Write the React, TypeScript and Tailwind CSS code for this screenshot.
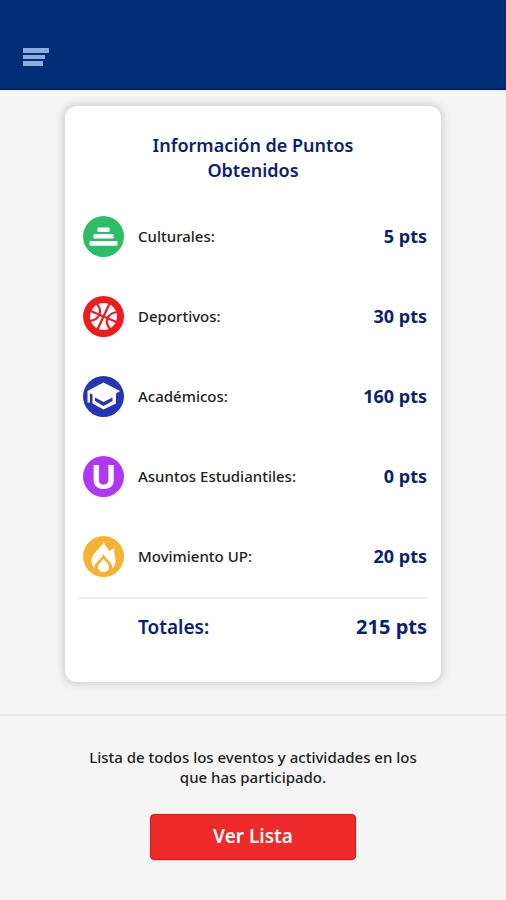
import type { ReactNode } from "react";

interface Category {
  id: string;
  label: string;
  points: number;
  color: string;
  icon: ReactNode;
}

const categories: Category[] = [
  {
    id: "culturales",
    label: "Culturales:",
    points: 5,
    color: "bg-[#2dbd66]",
    icon: (
      <svg viewBox="0 0 41 41" className="size-full" fill="white" aria-hidden="true">
        <rect x="14.5" y="11.5" width="12" height="4.5" rx="0.8" />
        <rect x="10.5" y="18" width="20" height="4.5" rx="0.8" />
        <rect x="6.5" y="25" width="28" height="4.8" rx="0.8" />
      </svg>
    ),
  },
  {
    id: "deportivos",
    label: "Deportivos:",
    points: 30,
    color: "bg-[#ee1c1f]",
    icon: (
      <svg viewBox="0 0 41 41" className="size-full" aria-hidden="true">
        <circle cx="20.5" cy="20.5" r="13.5" fill="white" />
        <g fill="none" stroke="#ee1c1f" strokeWidth="2.2">
          <path d="M27 6.500 14 34.500" />
          <path d="M6.500 14.500 34.500 26.500" />
          <path d="M13 7c7 7 5 17-7 18" />
          <path d="M28 34c-7-7-5-17 7-18" />
        </g>
      </svg>
    ),
  },
  {
    id: "academicos",
    label: "Académicos:",
    points: 160,
    color: "bg-[#2634b5]",
    icon: (
      <svg viewBox="0 0 41 41" className="size-full" aria-hidden="true">
        <path
          d="M20.500 6.500 37 15 33 17.500V27.500L20.500 33.500 9.500 27.500V18.500L7 17.200V26.500H4.500V15Z"
          fill="white"
        />
        <path d="M12 21.500 20.500 26 29.500 21.500V25L20.500 30 12 25Z" fill="#2634b5" />
      </svg>
    ),
  },
  {
    id: "asuntos",
    label: "Asuntos Estudiantiles:",
    points: 0,
    color: "bg-[#b136f5]",
    icon: <span className="text-[34px] leading-none font-bold text-white">U</span>,
  },
  {
    id: "movimiento",
    label: "Movimiento UP:",
    points: 20,
    color: "bg-[#f5b335]",
    icon: (
      <svg viewBox="0 0 41 41" className="size-full" aria-hidden="true">
        <path
          d="M21 5.500c-2 6-12 11-12.500 18.500-.3 5 3 9.500 7 11.500h10c4-2 7-5.500 7-10.500 0-4-1.500-7-1.300-12.500-2 .5-4 1.500-5 3-1-4.500-5.200-5-5.200-10z"
          fill="white"
        />
        <path d="M12.500 36c-4-9 5-11 8-18 3 7 12 9 8 18z" fill="#f5b335" />
        <path d="M20.500 22.500c2 3.500 5.500 5.500 5.500 9a5.500 4.500 0 0 1-11 0c0-3.500 3.500-5.500 5.500-9z" fill="white" />
      </svg>
    ),
  },
];

export default function App() {
  const total = categories.reduce((sum, c) => sum + c.points, 0);

  return (
    <div className="min-h-screen bg-[#f5f5f5] font-['Noto_Sans',sans-serif]">
      {/* Header */}
      <header className="flex h-[90px] items-end border-b border-[#120a78] bg-[#002d74] px-[23px] pb-[23px]">
        <button type="button" aria-label="Menú" className="flex flex-col gap-[2px]">
          <span className="h-[5px] w-[26px] bg-[#8dabdb]" />
          <span className="h-1 w-[22px] bg-[#8dabdb]" />
          <span className="h-[5px] w-5 bg-[#8dabdb]" />
        </button>
      </header>

      {/* Points card */}
      <main className="px-4 pt-4">
        <section className="mx-auto max-w-[376px] rounded-xl bg-white px-[14px] pt-[27px] pb-10 text-[#0b1f6f] shadow-[0_0_8px_2px_rgba(0,0,0,0.16)]">
          <h1 className="mx-auto mb-[13px] max-w-60 text-center text-lg leading-[25px] font-semibold">
            Información de Puntos Obtenidos
          </h1>

          <ul className="mb-px">
            {categories.map((c) => (
              <li key={c.id} className="flex h-20 items-center pl-1">
                <span className={`flex size-[41px] shrink-0 items-center justify-center rounded-full ${c.color}`}>
                  {c.icon}
                </span>
                <span className="ml-[14px] flex-1 text-[15px] font-medium text-[#222222]">{c.label}</span>
                <span className="text-lg font-bold">{c.points} pts</span>
              </li>
            ))}
          </ul>

          <div className="flex items-center justify-between border-t-2 border-[#eeeeee] pt-[14px] pl-[59px]">
            <span className="text-[19px] font-semibold">Totales:</span>
            <span className="text-xl font-bold">{total} pts</span>
          </div>
        </section>
      </main>

      {/* Event list */}
      <section className="mt-8 border-t-2 border-[#e6e6e6] px-4 pt-[31px] pb-10 text-center">
        <p className="mx-auto max-w-[340px] text-[15px] leading-5 font-medium text-[#222222]">
          Lista de todos los eventos y actividades en los que has participado.
        </p>
        <button
          type="button"
          className="mt-[27px] h-[46px] w-[206px] rounded-[4px] border border-[#e3121a] bg-[#ee2a2b] text-[19px] font-semibold text-white shadow-sm"
        >
          Ver Lista
        </button>
      </section>
    </div>
  );
}
